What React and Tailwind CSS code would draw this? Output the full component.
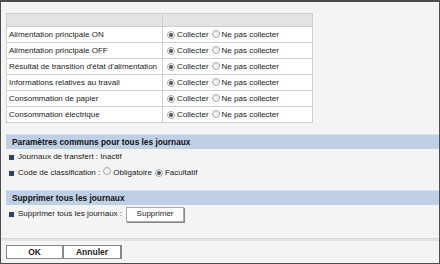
import React from 'react';

const rows = [
  'Alimentation principale ON',
  'Alimentation principale OFF',
  "Résultat de transition d'état d'alimentation",
  'Informations relatives au travail',
  'Consommation de papier',
  'Consommation électrique',
];

const Radio = ({ checked }) => (
  <span className="inline-flex items-center justify-center w-[8px] h-[8px] rounded-full border border-[#a8a8a8] bg-[#f2f2f2] shrink-0">
    {checked && <span className="w-[4px] h-[4px] rounded-full bg-[#555]" />}
  </span>
);

const Bullet = () => <span className="w-[5px] h-[5px] bg-[#2c3f73] shrink-0" />;

const SectionBar = ({ children }) => (
  <div className="h-[15px] bg-[#bfd0e6] border-t border-[#d6e1ef] flex items-center pl-[6px] font-bold text-[8.3px] text-[#111]">
    {children}
  </div>
);

export default function App() {
  return (
    <div
      className="w-[440px] h-[264px] bg-[#f4f4f4] border border-[#4d4d4d] border-t-2 text-[8px] text-[#1a1a1a] flex flex-col overflow-hidden"
      style={{ fontFamily: '"Liberation Sans", Arial, sans-serif' }}
    >
      <div className="pl-[5px] pt-[11px]">
        <table className="w-[307px] border-collapse bg-white border border-[#c9c9c9]">
          <tbody>
            <tr className="h-[13px] bg-[#e4e4e4]">
              <td className="w-[156px] border border-[#cfcfcf]" />
              <td className="border border-[#cfcfcf]" />
            </tr>
            {rows.map((r) => (
              <tr key={r} className="h-[16px]">
                <td className="border border-[#cfcfcf] pl-[2px] whitespace-nowrap leading-none">{r}</td>
                <td className="border border-[#cfcfcf] pl-[4px]">
                  <div className="flex items-center leading-none">
                    <Radio checked />
                    <span className="ml-[2px]">Collecter</span>
                    <span className="ml-[3px]"><Radio /></span>
                    <span className="ml-[2px]">Ne pas collecter</span>
                  </div>
                </td>
              </tr>
            ))}
          </tbody>
        </table>
      </div>

      <div className="pl-[5px] mt-[11px]">
        <SectionBar>Paramètres communs pour tous les journaux</SectionBar>
        <div className="flex items-center gap-[4px] h-[16px] pl-[3px]">
          <Bullet />
          <span>Journaux de transfert : Inactif</span>
        </div>
        <div className="flex items-center h-[16px] pl-[3px]">
          <Bullet />
          <span className="ml-[4px]">Code de classification :</span>
          <span className="ml-[3px]"><Radio /></span>
          <span className="ml-[2px]">Obligatoire</span>
          <span className="ml-[3px]"><Radio checked /></span>
          <span className="ml-[2px]">Facultatif</span>
        </div>

        <div className="mt-[9px]">
          <SectionBar>Supprimer tous les journaux</SectionBar>
        </div>
        <div className="flex items-center h-[18px] pl-[3px]">
          <Bullet />
          <span className="ml-[4px]">Supprimer tous les journaux :</span>
          <button className="ml-[4px] w-[58px] h-[15px] bg-white border border-[#aaa] shadow-[1px_1px_0_#888] text-[8px] leading-none text-[#222]">
            Supprimer
          </button>
        </div>
      </div>

      <div className="mt-[15px] h-[3px] bg-[#e3e3e3] border-t border-[#d8d8d8]" />

      <div className="flex pl-[5px] mt-[4px]">
        <button className="w-[58px] h-[14px] bg-white border border-[#888] border-r-2 font-bold text-[8.5px] leading-none text-[#222]">
          OK
        </button>
        <button className="w-[58px] h-[14px] bg-white border border-[#888] border-l-0 border-r-2 font-bold text-[8.5px] leading-none text-[#222]">
          Annuler
        </button>
      </div>
    </div>
  );
}
